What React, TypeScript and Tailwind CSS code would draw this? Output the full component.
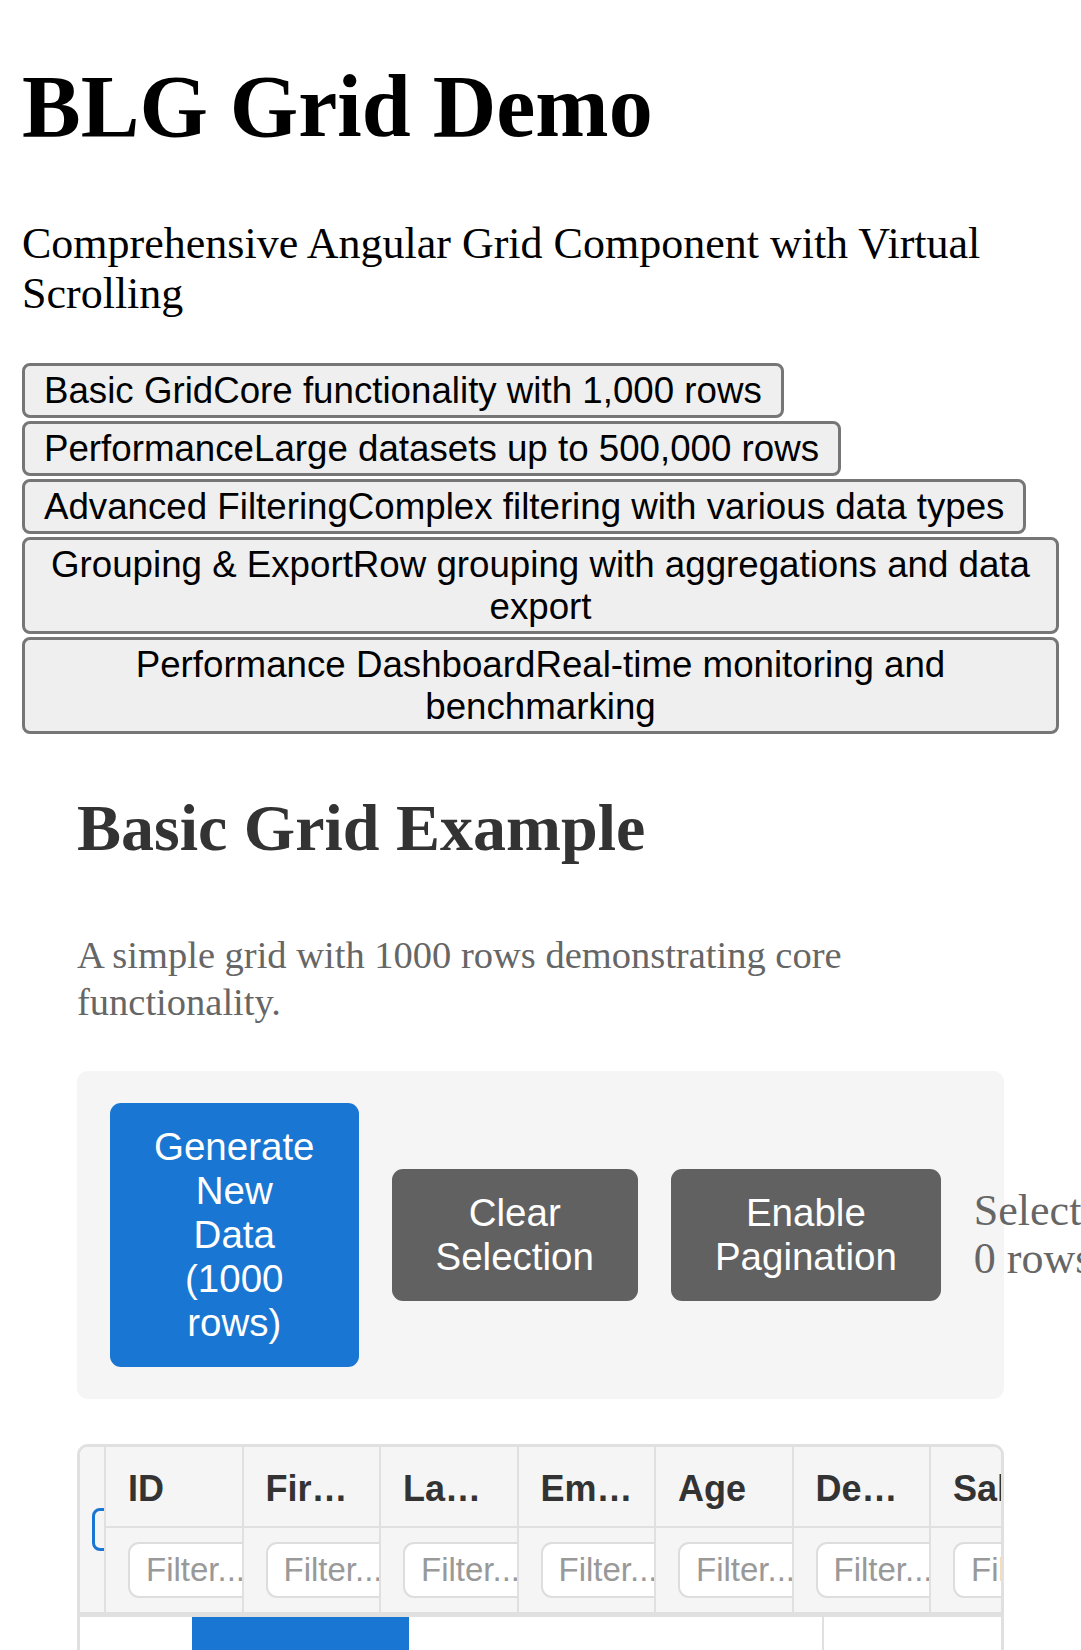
import React from "react"

type Demo = { title: string; desc: string }

const demos: Demo[] = [
  { title: "Basic Grid", desc: "Core functionality with 1,000 rows" },
  { title: "Performance", desc: "Large datasets up to 500,000 rows" },
  { title: "Advanced Filtering", desc: "Complex filtering with various data types" },
  { title: "Grouping & Export", desc: "Row grouping with aggregations and data export" },
  { title: "Performance Dashboard", desc: "Real-time monitoring and benchmarking" },
]

const columns = ["ID", "First Name", "Last Name", "Email", "Age", "Department", "Salary"]

const sans = "font-['Liberation_Sans',Arial,Helvetica,sans-serif]"

export default function App() {
  return (
    <div className="w-full overflow-hidden bg-white px-[22px] pb-[40px] font-['Liberation_Serif','Times_New_Roman',serif] text-black">
      <h1 className="mt-[58px] text-[88px] font-bold leading-[97px]">BLG Grid Demo</h1>
      <p className="mt-[64px] text-[44px] leading-[50px]">
        Comprehensive Angular Grid Component with Virtual Scrolling
      </p>

      <nav className="mt-[44px] flex flex-col items-start gap-[3px]">
        {demos.map(d => (
          <button
            key={d.title}
            className={`${sans} max-w-full rounded-[8px] border-[3px] border-[#767676] bg-[#efefef] px-[19px] py-[3.5px] text-center text-[36.7px] leading-[42px] text-black`}
          >
            <span>{d.title}</span>
            <span>{d.desc}</span>
          </button>
        ))}
      </nav>

      <BasicGridExample />
    </div>
  )
}

function BasicGridExample() {
  return (
    <section className="px-[55px]">
      <h2 className="mt-[56px] text-[66px] font-bold leading-[76px] text-[#333]">Basic Grid Example</h2>
      <p className="mt-[66px] text-[38.5px] leading-[47px] text-[#666]">
        A simple grid with 1000 rows demonstrating core functionality.
      </p>

      {/* controls */}
      <div className="mt-[45px] flex items-center gap-[33px] rounded-[11px] bg-[#f5f5f5] px-[33px] py-[32px]">
        <button className={`${sans} rounded-[11px] bg-[#1976d2] px-[44px] py-[22px] text-[38.5px] leading-[44px] text-white`}>
          Generate New Data (1000 rows)
        </button>
        <button className={`${sans} rounded-[11px] bg-[#616161] px-[44px] py-[22px] text-[38.5px] leading-[44px] text-white`}>
          Clear Selection
        </button>
        <button className={`${sans} rounded-[11px] bg-[#616161] px-[44px] py-[22px] text-[38.5px] leading-[44px] text-white`}>
          Enable Pagination
        </button>
        <span className="text-[44px] leading-[48px] text-[#666]">Selected: 0 rows</span>
      </div>

      <DataGrid />
    </section>
  )
}

function DataGrid() {
  return (
    <div className={`${sans} mt-[45px] overflow-hidden rounded-[11px] border-[3px] border-[#e0e0e0] bg-white`}>
      {/* header */}
      <div className="flex border-b-[5px] border-[#e0e0e0] bg-[#f5f5f5]">
        <div className="flex w-[26px] shrink-0 items-center overflow-hidden border-r-2 border-[#e0e0e0]">
          <div className="ml-[12px] h-[43px] w-[40px] shrink-0 rounded-[8px] border-[3px] border-[#1976d2]" />
        </div>
        {columns.map(col => (
          <div key={col} className="flex w-[137.5px] shrink-0 flex-col overflow-hidden border-r-2 border-[#e0e0e0]">
            <div className="flex h-[81px] items-center border-b-2 border-[#e0e0e0] pl-[22px] pr-[19px] pt-[4px]">
              <div className="truncate text-[36px] font-bold text-[#333]">{col}</div>
            </div>
            <div className="flex h-[84px] items-center pl-[22px]">
              <input
                placeholder="Filter..."
                className="h-[56px] w-[150px] shrink-0 rounded-[11px] border-2 border-[#ddd] bg-white px-[16px] text-[33px] text-[#333] outline-none placeholder:text-[#999]"
              />
            </div>
          </div>
        ))}
      </div>

      {/* body */}
      <div className="flex h-[120px]">
        <div className="w-[112px] shrink-0" />
        <div className="w-[217px] shrink-0 bg-[#1976d2]" />
        <div className="w-[415px] shrink-0 border-r-2 border-[#e0e0e0]" />
        <div className="flex-1" />
      </div>
    </div>
  )
}
